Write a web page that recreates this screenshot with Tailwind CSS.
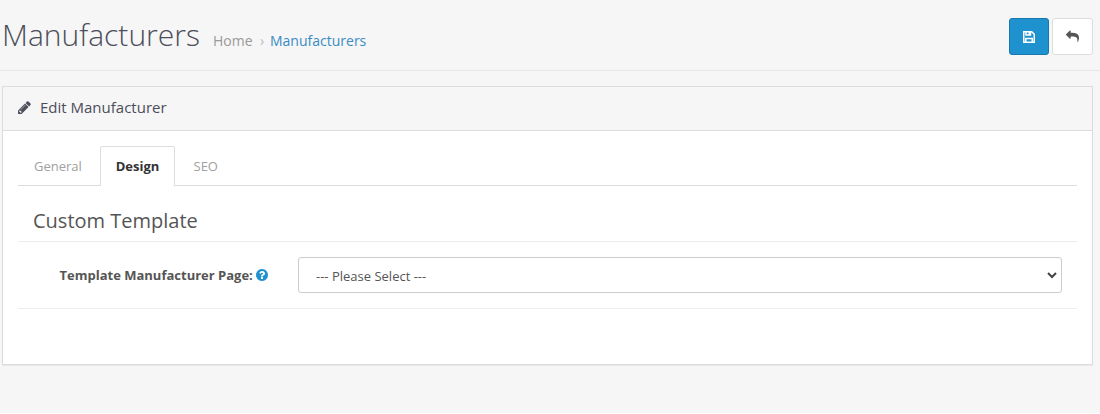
<!DOCTYPE html>
<html lang="en">
<head>
<meta charset="utf-8">
<title>Manufacturers</title>
<script src="https://cdn.jsdelivr.net/npm/@tailwindcss/browser@4"></script>
</head>
<body class="h-[414px] overflow-hidden bg-white font-['Open_Sans',sans-serif] text-[13px] text-[#4c4d5a]">
<div class="h-[413px] bg-[#f6f6f6]">
  <header class="flex h-[71px] items-start justify-between border-b border-[#e7e7e7] pl-[2px] pr-[7px]">
    <div class="flex items-baseline pt-[13px]">
      <h1 class="w-[211px] whitespace-nowrap text-[30px] leading-[44px] font-light">Manufacturers</h1>
      <nav class="flex items-baseline text-[14px]">
        <a class="w-[47px] text-[#999]">Home</a>
        <span class="w-[10px] text-[14px] text-[#bbb]">›</span>
        <a class="text-[#3a8cc4]">Manufacturers</a>
      </nav>
    </div>
    <div class="flex gap-[3px] pt-[18px]">
      <button class="flex h-[37px] w-[40px] items-center justify-center rounded-[3px] border border-[#1978ab] bg-[#1e91cf] text-white">
        <svg class="size-[14px]" viewBox="0 0 14 14" fill="none" stroke="currentColor" stroke-width="1.500"><path d="M1.750 1.750h8l2.500 2.500v8H1.750z"/><path d="M4 2v3h4.500V2M3.750 12V8.500h6.500V12"/><path d="M6.500 2h2v3h-2z" fill="currentColor" stroke="none"/></svg>
      </button>
      <button class="flex h-[37px] w-[41px] items-center justify-center rounded-[3px] border border-[#ddd] bg-white pb-[1px] text-[#555]">
        <svg class="size-[13px]" viewBox="0 0 1792 1792" fill="currentColor"><path d="M1792 1120q0 166-127 451-3 7-10.500 24t-13.500 30-13 22q-12 17-28 17-15 0-23.500-10t-8.500-25q0-9 2.500-26.500t2.500-23.500q5-68 5-123 0-101-17.500-181t-48.500-138.500-80-101-105.500-69.500-133-42.500-154-21.500-175.500-6h-224v256q0 26-19 45t-45 19-45-19l-512-512q-19-19-19-45t19-45l512-512q19-19 45-19t45 19 19 45v256h224q713 0 875 403 53 134 53 333z"/></svg>
      </button>
    </div>
  </header>

  <main class="mt-[15px] ml-[2px] mr-[7px] h-[279px] border border-[#dcdcdc] bg-white shadow-[0_1px_0_#e8e8e8]">
    <div class="flex h-[44px] items-center border-b border-[#dcdcdc] bg-[#f6f6f6] pl-[14px]">
      <svg class="mr-[8px] mb-[2px] size-[15px]" viewBox="0 0 1792 1792" fill="currentColor"><path d="M491 1536l91-91-235-235-91 91v107h128v128h107zm523-928q0-22-22-22-10 0-17 7l-542 542q-7 7-7 17 0 22 22 22 10 0 17-7l542-542q7-7 7-17zm-54-192l416 416-832 832h-416v-416zm683 96q0 53-37 90l-166 166-416-416 166-165q36-38 90-38 53 0 91 38l235 234q37 39 37 91z"/></svg>
      <h3 class="mb-[4px] text-[15px] leading-[20px]">Edit Manufacturer</h3>
    </div>
    <div class="px-[15px] pt-[15px]">
      <div class="flex h-[40px] border-b border-[#ddd] leading-[20px] text-[#a0a0a0]">
        <a class="w-[82px] py-[10px] pl-[16px]">General</a>
        <a class="-mb-px w-[75px] rounded-t-[2px] border border-b-0 border-[#ddd] bg-white py-[9px] text-center font-bold text-[#333]">Design</a>
        <a class="py-[10px] pl-[18.500px]">SEO</a>
      </div>
      <h2 class="h-[56px] border-b border-[#ededed] pt-[21px] pl-[15px] text-[20px] leading-[28px] text-[#555]">Custom Template</h2>
      <div class="flex h-[67px] items-start border-b border-[#ededed] pt-[15px]">
        <label class="flex w-[280px] items-center pt-[8px] pl-[41.500px] leading-[20px] font-bold text-[#555]">Template Manufacturer Page:
          <svg class="ml-[2.500px] size-[14px] text-[#1e91cf]" viewBox="0 0 1792 1792" fill="currentColor"><path d="M1024 1376v-192q0-14-9-23t-23-9h-192q-14 0-23 9t-9 23v192q0 14 9 23t23 9h192q14 0 23-9t9-23zm256-672q0-88-55.500-163t-138.500-116-170-41q-243 0-371 213-15 24 8 42l132 100q7 6 19 6 16 0 25-12 53-68 86-92 34-24 86-24 48 0 85.500 26t37.500 59q0 38-20 61t-68 45q-63 28-115.500 86.500t-52.500 125.500v36q0 14 9 23t23 9h192q14 0 23-9t9-23q0-19 21.500-49.500t54.500-49.500q32-18 49-28.500t46-35 44.500-48 28-60.500 12.500-81zm384 192q0 209-103 385.500t-279.500 279.500-385.500 103-385.500-103-279.500-279.500-103-385.500 103-385.500 279.500-279.500 385.500-103 385.500 103 279.500 279.500 103 385.500z"/></svg>
        </label>
        <div class="flex h-[36px] w-[764px] items-center justify-between rounded-[3px] border border-[#ccc] pr-[4px] pl-[17px] text-[#555]">
          <span class="pt-[3px]">--- Please Select ---</span>
          <svg class="h-[7px] w-[10px] text-[#444]" viewBox="0 0 10 7" fill="none" stroke="currentColor" stroke-width="2"><path d="M1 1l4 4 4-4"/></svg>
        </div>
      </div>
    </div>
  </main>
</div>
</body>
</html>
